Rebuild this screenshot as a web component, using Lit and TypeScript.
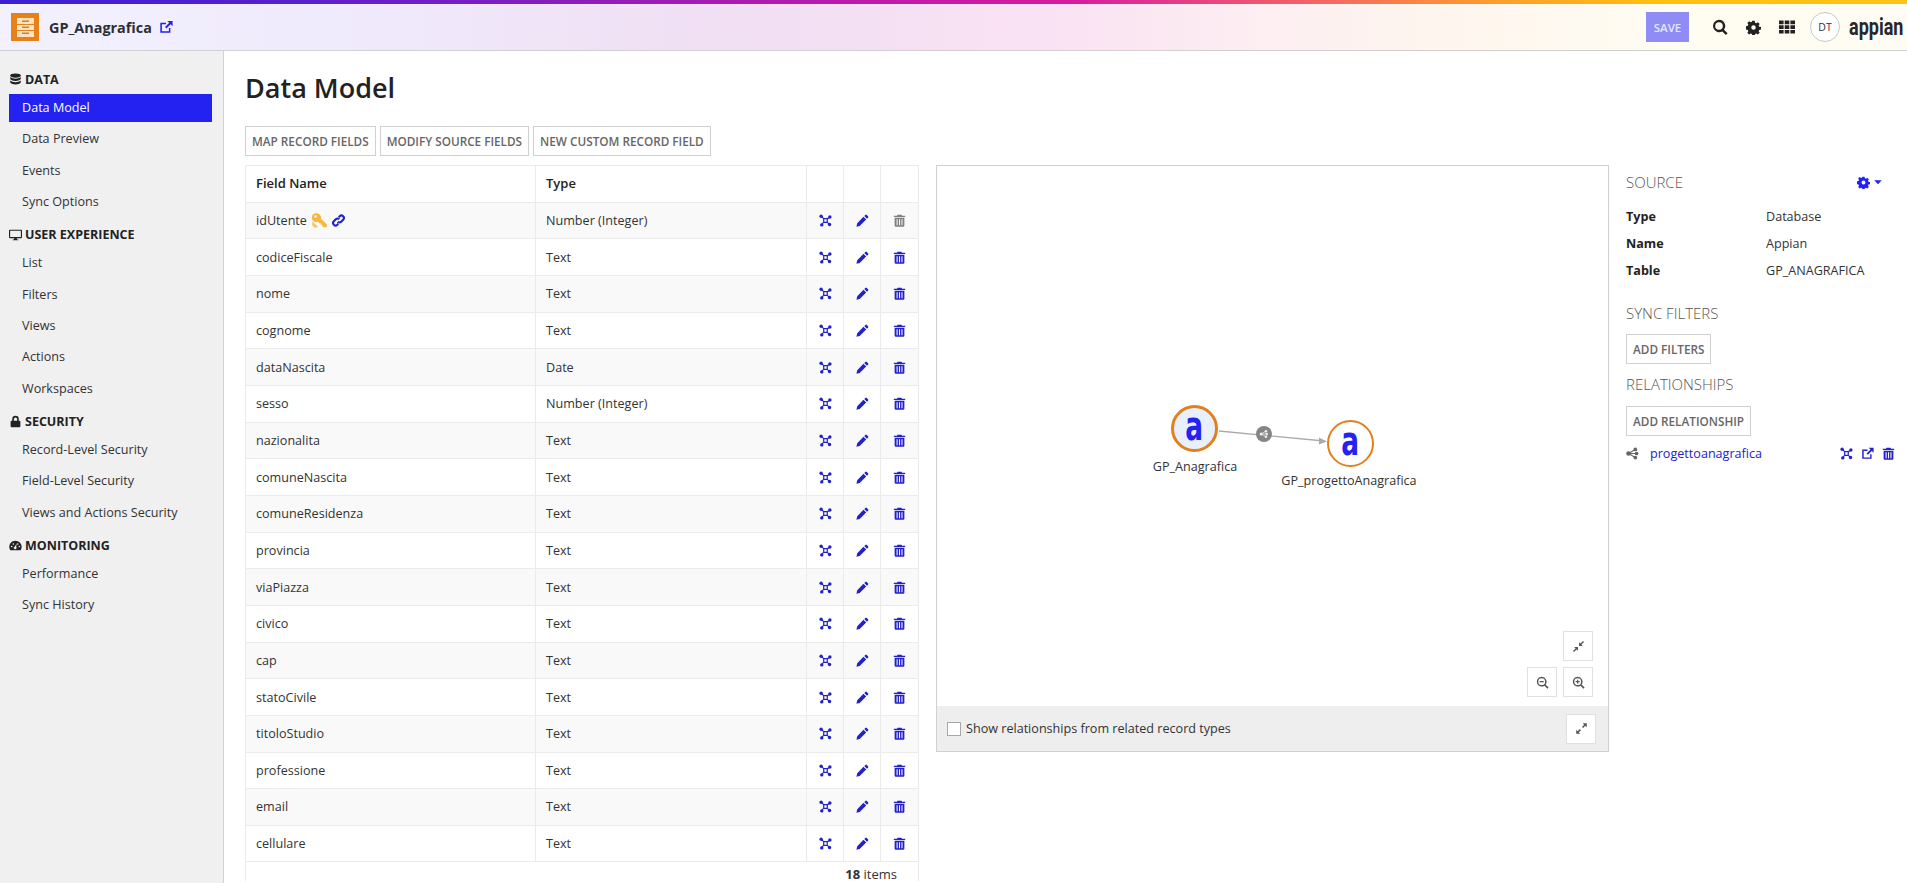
import { LitElement, html, css, svg } from "lit";
import { customElement } from "lit/decorators.js";

const fields = [
  ["idUtente", "Number (Integer)"],
  ["codiceFiscale", "Text"],
  ["nome", "Text"],
  ["cognome", "Text"],
  ["dataNascita", "Date"],
  ["sesso", "Number (Integer)"],
  ["nazionalita", "Text"],
  ["comuneNascita", "Text"],
  ["comuneResidenza", "Text"],
  ["provincia", "Text"],
  ["viaPiazza", "Text"],
  ["civico", "Text"],
  ["cap", "Text"],
  ["statoCivile", "Text"],
  ["titoloStudio", "Text"],
  ["professione", "Text"],
  ["email", "Text"],
  ["cellulare", "Text"],
];

const nav = [
  { title: "DATA", icon: "db", items: ["Data Model", "Data Preview", "Events", "Sync Options"] },
  { title: "USER EXPERIENCE", icon: "monitor", items: ["List", "Filters", "Views", "Actions", "Workspaces"] },
  { title: "SECURITY", icon: "lock", items: ["Record-Level Security", "Field-Level Security", "Views and Actions Security"] },
  { title: "MONITORING", icon: "gauge", items: ["Performance", "Sync History"] },
];

// icons, all on a 16x16 box
const paths: Record<string, unknown> = {
  db: svg`<ellipse cx="8" cy="3.2" rx="6.5" ry="2.6"/><path d="M1.5 5v2.2C1.5 8.6 4.4 9.8 8 9.8s6.500-1.200 6.500-2.600V5C13 6.500 10.500 7 8 7S3 6.500 1.500 5z"/><path d="M1.500 9.300v2.200C1.500 13 4.400 14.200 8 14.200s6.500-1.200 6.500-2.700V9.300c-1.500 1.500-4 2-6.500 2s-5-.5-6.500-2z"/>`,
  monitor: svg`<path fill-rule="evenodd" d="M1 2h14a1 1 0 0 1 1 1v8.500a1 1 0 0 1-1 1H9.500l.4 1.500H11.500v1h-7v-1h1.600l.4-1.500H1a1 1 0 0 1-1-1V3a1 1 0 0 1 1-1zm.4 1.400v7.600h13.200V3.400z"/>`,
  lock: svg`<path fill-rule="evenodd" d="M4 7V5a4 4 0 0 1 8 0v2h.8a1.200 1.200 0 0 1 1.200 1.200v5.600a1.200 1.200 0 0 1-1.200 1.200H3.200A1.200 1.200 0 0 1 2 13.800V8.200A1.200 1.200 0 0 1 3.200 7zm2 0h4V5a2 2 0 0 0-4 0z"/>`,
  gauge: svg`<path fill-rule="evenodd" d="M8 2a7.600 7.600 0 0 1 7.600 7.600c0 1.500-.4 2.900-1.200 4.100H1.600A7.600 7.600 0 0 1 8 2zM3.300 8.200a1 1 0 1 0 0 2 1 1 0 0 0 0-2zm2-3a1 1 0 1 0 0 2 1 1 0 0 0 0-2zm5.400 0a1 1 0 1 0 0 2 1 1 0 0 0 0-2zm2 3a1 1 0 1 0 0 2 1 1 0 0 0 0-2zM9.300 5.500 7.300 9.200a1.700 1.700 0 1 0 1.600.6z"/>`,
  external: svg`<path d="M1.500 3H8V4.800H3.300v8h8V9H13v5.500H1.500z"/><path d="M9.500 1H15.500V7L13.300 4.800 8.500 9.600 6.900 8 11.700 3.200z"/>`,
  search: svg`<path fill-rule="evenodd" d="M7 .8a6.200 6.200 0 0 1 5 9.900l3.600 3.600-1.700 1.700-3.600-3.600A6.200 6.200 0 1 1 7 .8zm0 2.400a3.800 3.800 0 1 0 0 7.600 3.800 3.800 0 0 0 0-7.600z"/>`,
  gear: svg`<path fill-rule="evenodd" d="M6.700 .8h2.600l.4 2 1.300.6 1.700-1.100 1.900 1.900-1.100 1.700.6 1.300 2 .4v2.600l-2 .4-.6 1.300 1.100 1.700-1.900 1.900-1.700-1.100-1.300.6-.4 2H6.700l-.4-2-1.300-.6-1.700 1.100-1.900-1.900 1.100-1.700-.6-1.300-2-.4V6.600l2-.4.600-1.300-1.100-1.700 1.900-1.900L5 2.400l1.300-.6zM8 5.600a2.400 2.400 0 1 0 0 4.800 2.400 2.400 0 0 0 0-4.800z"/>`,
  grid: svg`<path d="M0 1.500h4.600v3.700H0zM5.700 1.500h4.600v3.700H5.700zM11.400 1.500H16v3.700h-4.600zM0 6.200h4.600v3.700H0zM5.700 6.200h4.600v3.700H5.700zM11.400 6.200H16v3.700h-4.600zM0 10.900h4.600v3.700H0zM5.700 10.900h4.600v3.700H5.700zM11.400 10.900H16v3.700h-4.600z"/>`,
  map: svg`<circle cx="2.600" cy="2.800" r="2.100"/><circle cx="13.400" cy="3.600" r="2.100"/><circle cx="3.400" cy="13.400" r="2.100"/><circle cx="13" cy="13" r="2.100"/><path fill="none" stroke="currentColor" stroke-width="1.500" d="M3 3l3 3m7-2-3 2m-7 7 3-3m7 3-3-3M5.800 5.800h4.400v4.400H5.800z"/>`,
  pencil: svg`<path d="M11.500 1.200a1.300 1.300 0 0 1 1.800 0l1.500 1.500a1.300 1.300 0 0 1 0 1.800l-1.300 1.300-3.300-3.300zM9.200 3.500l3.300 3.300-8 8-4 1 1-4.300z"/>`,
  trash: svg`<path fill-rule="evenodd" d="M5.500 .8h5l.6 1.200H15v1.600H1V2h3.900zM2 4.600h12v10a1 1 0 0 1-1 1H3a1 1 0 0 1-1-1zm2.400 1.800v7.400h1.300V6.400zm3 0v7.400h1.300V6.400zm3 0v7.400h1.300V6.400z"/>`,
  link: svg`<path fill="none" stroke="currentColor" stroke-width="2.600" d="M7 9.500a3 3 0 0 0 4.300 0l2.400-2.400a3 3 0 0 0-4.300-4.300L8.300 3.900M9 6.500a3 3 0 0 0-4.300 0L2.300 8.900a3 3 0 0 0 4.300 4.300l1.100-1.100"/>`,
  key: svg`<path fill-rule="evenodd" d="M5 .3a4.700 4.700 0 0 1 4.600 5.700l6.100 6.100v3H12l-1-1v-1.600H9.300V10.800H7.700L6.200 9.300A4.700 4.700 0 1 1 5 .3zM3.700 2.500a1.300 1.300 0 1 0 0 2.600 1.300 1.300 0 0 0 0-2.600z"/><path d="M.3 8.800 6 14.500v1H2.500L.3 13.300z" opacity=".8"/>`,
  caret: svg`<path d="M2 5h12L8 11.500z"/>`,
  share: svg`<circle cx="3" cy="8" r="2.700"/><circle cx="11.500" cy="3" r="2.300"/><circle cx="13" cy="8" r="2.300"/><circle cx="11.500" cy="13" r="2.300"/><path fill="none" stroke="currentColor" stroke-width="1.300" d="M3 8l8.500-5M3 8h10M3 8l8.500 5"/>`,
  compress: svg`<path d="M14.800 2.400 11.600 5.600l1.700 1.700H8.700V2.700l1.700 1.700 3.200-3.200zM1.200 13.600l3.200-3.200-1.700-1.700h4.600v4.600l-1.700-1.700-3.200 3.200z"/>`,
  expand: svg`<path d="M9.500 1.500H14.500V6.500L12.700 4.700 10 7.400 8.600 6 11.300 3.300zM6.500 14.500H1.500V9.500L3.300 11.300 6 8.600 7.400 10 4.700 12.700z"/>`,
  zoomOut: svg`<path fill-rule="evenodd" d="M7 1a6 6 0 0 1 4.800 9.600l3.700 3.700-1.400 1.400-3.700-3.700A6 6 0 1 1 7 1zm0 1.800a4.200 4.200 0 1 0 0 8.400 4.200 4.200 0 0 0 0-8.400zM4.500 6.200h5v1.600h-5z"/>`,
  zoomIn: svg`<path fill-rule="evenodd" d="M7 1a6 6 0 0 1 4.800 9.600l3.700 3.700-1.400 1.400-3.700-3.700A6 6 0 1 1 7 1zm0 1.800a4.200 4.200 0 1 0 0 8.400 4.200 4.200 0 0 0 0-8.400zM6.300 4.500h1.400v1.800h1.800v1.400H7.700v1.800H6.300V7.700H4.500V6.300h1.800z"/>`,
};

function icon(name: string, size: number, color?: string) {
  return html`<svg class="ic" width=${size} height=${size} viewBox="0 0 16 16" fill="currentColor" style=${color ? `color:${color}` : ""}>${paths[name]}</svg>`;
}

@customElement("app-root")
export class AppRoot extends LitElement {
  static styles = css`
    :host {
      display: block;
      height: 883px;
      overflow: hidden;
      font-family: "Open Sans", sans-serif;
      font-size: 12.600px;
      color: #2e2e35;
      background: #fff;
    }
    .ic { display: block; flex: none; }
    .rainbow {
      height: 4px;
      background: linear-gradient(90deg, #3a1fd6 0%, #5a1fd0 16%, #a81cb0 38%, #d91aa0 56%, #f0606a 68%, #ff9a30 78%, #ffc010 87%, #fdc31a 100%);
    }
    .top {
      height: 47px;
      display: flex;
      align-items: center;
      box-sizing: border-box;
      border-bottom: 1px solid #d0d0d0;
      padding: 0 2px 0 11px;
      background: linear-gradient(90deg, #f3f1fe 0%, #efeafc 18%, #f1dff3 38%, #f9e2f3 55%, #fdeef2 66%, #fef6ee 76%, #fffcf2 88%, #fffdf3 100%);
    }
    .logo {
      width: 28px;
      height: 28px;
      background: #e8811a;
      display: flex;
      align-items: center;
      justify-content: center;
    }
    .appname { margin-left: 10px; font-size: 14.400px; font-weight: 700; color: #2e2e35; }
    .ext { margin-left: 7px; color: #2322f0; }
    .spacer { flex: 1; }
    .save {
      width: 43px;
      height: 30px;
      background: #8f8df5;
      color: #e6e6fb;
      font-size: 11.500px;
      font-weight: 600;
      display: flex;
      align-items: center;
      justify-content: center;
      margin-right: 23px;
    }
    .tool { margin-right: 18px; color: #222; }
    .tool.last { margin-right: 15px; }
    .avatar {
      width: 28px;
      height: 28px;
      border: 1px solid #c8c8c8;
      border-radius: 50%;
      background: #fff;
      font-size: 10.500px;
      display: flex;
      align-items: center;
      justify-content: center;
      margin-right: 9px;
      color: #333;
    }
    .brand {
      width: 56px;
      font-family: "Roboto", sans-serif;
      font-weight: 700;
      font-size: 18px;
      line-height: 24px;
      color: #26262c;
      transform: scaleY(1.350);
      white-space: nowrap;
    }
    .body { display: flex; height: 832px; }
    .side {
      width: 224px;
      flex: none;
      box-sizing: border-box;
      background: #f0f0f0;
      border-right: 1px solid #cfd2d4;
      padding: 19px 11px 0 9px;
    }
    .group { display: flex; align-items: center; gap: 3px; height: 18px; font-weight: 700; font-size: 12.500px; color: #222; margin-bottom: 6px; }
    .item { height: 28px; line-height: 28px; padding-left: 13px; margin-bottom: 3.300px; color: #333; }
    .item.on { background: #2322f0; color: #fff; }
    .section { margin-bottom: 9.500px; }
    .main { flex: 1; min-width: 0; padding: 0 0 0 21px; }
    h1 { margin: 0; padding-top: 18px; height: 75px; box-sizing: border-box; font-size: 27px; font-weight: 600; line-height: 38px; color: #222; }
    .btns { display: flex; gap: 4px; }
    .btn {
      box-sizing: border-box;
      height: 30px;
      display: inline-flex;
      align-items: center;
      padding: 0 6px;
      border: 1px solid #d0d0d0;
      background: #fff;
      font-size: 11.750px;
      font-weight: 600;
      color: #666;
      white-space: nowrap;
    }
    .cols { display: flex; margin-top: 9px; align-items: flex-start; }
    .table { width: 674px; flex: none; border: 1px solid #ebebeb; border-width: 1px 1px 0 1px; box-sizing: border-box; }
    .row {
      display: grid;
      grid-template-columns: 290px 271px 37px 37px 1fr;
      height: 36.670px;
      box-sizing: border-box;
      border-bottom: 1px solid #ebebeb;
    }
    .row.odd { background: #f9f9f9; }
    .cell {
      display: flex;
      align-items: center;
      padding-left: 10px;
      border-right: 1px solid #ebebeb;
      min-width: 0;
      color: #333;
    }
    .cell:last-child { border-right: 0; }
    .cell.act { padding: 0; justify-content: center; }
    .head .cell { font-weight: 600; color: #222; font-size: 13px; padding-bottom: 2px; }
    .name { gap: 5px; }
    .foot { text-align: right; padding: 6px 21px 0 0; color: #333; font-size: 13px; line-height: 13px; }
    .foot b { font-weight: 700; }
    .canvas {
      width: 673px;
      height: 587px;
      flex: none;
      margin-left: 17px;
      box-sizing: border-box;
      border: 1px solid #d0d0d0;
      position: relative;
      display: flex;
      flex-direction: column;
    }
    .stage { flex: 1; position: relative; }
    .wire { position: absolute; left: 0; top: 0; }
    .label { position: absolute; transform: translateX(-50%); white-space: nowrap; color: #333; }
    .node {
      position: absolute;
      box-sizing: border-box;
      width: 47px;
      height: 47px;
      border-radius: 50%;
      border: 2px solid #e0801f;
      background: #fff;
      display: flex;
      align-items: center;
      justify-content: center;
      color: #2322f0;
      font-family: "DejaVu Sans", sans-serif;
      font-weight: 700;
      font-size: 30px;
      line-height: 36px;
    }
    .node.sel { border-width: 3px; background: #e8f0fd; }
    .node span { display: block; transform: scale(0.880, 1.350) translateY(-2px); }
    .tb {
      position: absolute;
      width: 30px;
      height: 30px;
      box-sizing: border-box;
      border: 1px solid #e0e0e0;
      background: #fff;
      display: flex;
      align-items: center;
      justify-content: center;
      color: #555;
    }
    .bar {
      height: 45px;
      flex: none;
      background: #eee;
      display: flex;
      align-items: center;
      padding: 0 10px;
      color: #333;
      position: relative;
    }
    .check { width: 14px; height: 14px; box-sizing: border-box; border: 1px solid #a8a8a8; background: #fff; margin-right: 5px; }
    .bar .spacer { flex: 1; }
    .tb.exp { position: static; margin-right: 2px; }
    .panel { width: 271px; flex: none; margin-left: 17px; padding-top: 7px; }
    .phead { display: flex; align-items: center; justify-content: space-between; padding-right: 14px; }
    .ptitle { font-size: 15px; line-height: 20px; color: #555; font-weight: 300; }
    .pgear { display: flex; align-items: center; gap: 3px; color: #2322f0; }
    .kv { display: grid; grid-template-columns: 140px 1fr; margin-top: 11px; }
    .kv div { height: 27px; line-height: 27px; color: #333; }
    .kv .k { font-weight: 700; color: #222; }
    .psec { margin-top: 19px; }
    .psec .btn { margin-top: 11px; }
    .psec2 { margin-top: 10px; }
    .psec2 .btn { margin-top: 12px; }
    .rel { display: flex; align-items: center; margin-top: 9px; }
    .rel a { color: #2322c8; margin-left: 11px; }
    .rel .spacer { flex: 1; }
    .rel .acts { display: flex; gap: 8px; margin-right: 2px; }
  `;

  render() {
    return html`
      <div class="rainbow"></div>
      <header class="top">
        <div class="logo">
          <svg width="17" height="19" viewBox="0 0 17 19">
            <rect width="17" height="19" fill="#fbe3c4" />
            <rect y="6" width="17" height="1" fill="#e8811a" />
            <rect y="12" width="17" height="1" fill="#e8811a" />
            <rect x="5" y="2.500" width="7" height="1.500" fill="#c9822f" />
            <rect x="5" y="8.500" width="7" height="1.500" fill="#c9822f" />
            <rect x="5" y="14.500" width="7" height="1.500" fill="#c9822f" />
          </svg>
        </div>
        <div class="appname">GP_Anagrafica</div>
        <div class="ext">${icon("external", 14)}</div>
        <div class="spacer"></div>
        <div class="save">SAVE</div>
        <div class="tool">${icon("search", 16)}</div>
        <div class="tool">${icon("gear", 15)}</div>
        <div class="tool last">${icon("grid", 16)}</div>
        <div class="avatar">DT</div>
        <div class="brand">appian</div>
      </header>
      <div class="body">
        <nav class="side">
          ${nav.map(
            (g) => html`<div class="section">
              <div class="group">${icon(g.icon, 13)}<span>${g.title}</span></div>
              ${g.items.map((i) => html`<div class="item ${i === "Data Model" ? "on" : ""}">${i}</div>`)}
            </div>`
          )}
        </nav>
        <main class="main">
          <h1>Data Model</h1>
          <div class="btns">
            <div class="btn">MAP RECORD FIELDS</div>
            <div class="btn">MODIFY SOURCE FIELDS</div>
            <div class="btn">NEW CUSTOM RECORD FIELD</div>
          </div>
          <div class="cols">
            <div class="table">
              <div class="row head">
                <div class="cell">Field Name</div>
                <div class="cell">Type</div>
                <div class="cell"></div>
                <div class="cell"></div>
                <div class="cell"></div>
              </div>
              ${fields.map(
                (f, i) => html`<div class="row ${i % 2 === 0 ? "odd" : ""}">
                  <div class="cell name">
                    ${f[0]}
                    ${i === 0 ? html`${icon("key", 15, "#f5b83d")}${icon("link", 13, "#2322c8")}` : ""}
                  </div>
                  <div class="cell">${f[1]}</div>
                  <div class="cell act">${icon("map", 13, "#2322c8")}</div>
                  <div class="cell act">${icon("pencil", 13, "#2322c8")}</div>
                  <div class="cell act">${icon("trash", 13, i === 0 ? "#808080" : "#2322c8")}</div>
                </div>`
              )}
              <div class="foot"><b>18</b> items</div>
            </div>
            <section class="canvas">
              <div class="stage">
                <svg class="wire" width="671" height="540" viewBox="0 0 671 540">
                  <line x1="282" y1="265" x2="387" y2="275" stroke="#aaa" stroke-width="1.300" />
                  <path d="M390 275.500 382 271.500 382 278.500z" fill="#aaa" />
                  <circle cx="327" cy="268" r="8" fill="#858585" />
                  <g transform="translate(322.500 263.500) scale(0.560)" fill="#eee" color="#eee">${paths.share}</g>
                </svg>
                <div class="node sel" style="left:234px;top:239px"><span>a</span></div>
                <div class="label" style="left:258px;top:292px">GP_Anagrafica</div>
                <div class="node" style="left:390px;top:254px"><span>a</span></div>
                <div class="label" style="left:412px;top:306px">GP_progettoAnagrafica</div>
                <div class="tb" style="left:626px;top:465px">${icon("compress", 13)}</div>
                <div class="tb" style="left:590px;top:501px">${icon("zoomOut", 13)}</div>
                <div class="tb" style="left:626px;top:501px">${icon("zoomIn", 13)}</div>
              </div>
              <div class="bar">
                <div class="check"></div>
                <span>Show relationships from related record types</span>
                <div class="spacer"></div>
                <div class="tb exp">${icon("expand", 13)}</div>
              </div>
            </section>
            <aside class="panel">
              <div class="phead">
                <div class="ptitle">SOURCE</div>
                <div class="pgear">${icon("gear", 13)}${icon("caret", 10)}</div>
              </div>
              <div class="kv">
                <div class="k">Type</div><div>Database</div>
                <div class="k">Name</div><div>Appian</div>
                <div class="k">Table</div><div>GP_ANAGRAFICA</div>
              </div>
              <div class="psec">
                <div class="ptitle">SYNC FILTERS</div>
                <div class="btn">ADD FILTERS</div>
              </div>
              <div class="psec2">
                <div class="ptitle">RELATIONSHIPS</div>
                <div class="btn">ADD RELATIONSHIP</div>
              </div>
              <div class="rel">
                ${icon("share", 13, "#666")}
                <a>progettoanagrafica</a>
                <div class="spacer"></div>
                <div class="acts">
                  ${icon("map", 13, "#2322c8")}${icon("external", 13, "#2322c8")}${icon("trash", 13, "#2322c8")}
                </div>
              </div>
            </aside>
          </div>
        </main>
      </div>
    `;
  }
}
